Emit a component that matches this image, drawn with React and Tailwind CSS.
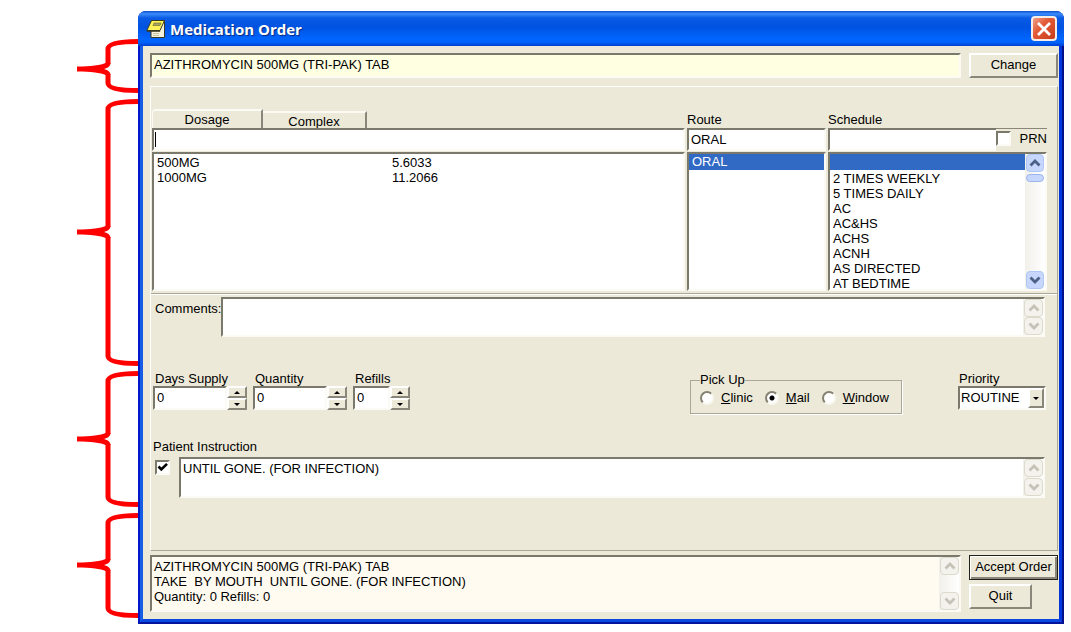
import React, { useState } from "react";

const SUNKEN =
  "border-2 border-t-[#7b786c] border-l-[#7b786c] border-r-[#fbfaf5] border-b-[#fbfaf5]";
const RAISED =
  "border-2 border-t-white border-l-white border-r-[#8a877a] border-b-[#8a877a] bg-[#ece9d8]";

const schedules = [
  "",
  "2 TIMES WEEKLY",
  "5 TIMES DAILY",
  "AC",
  "AC&HS",
  "ACHS",
  "ACNH",
  "AS DIRECTED",
  "AT BEDTIME",
];

const dosages = [
  ["500MG", "5.6033"],
  ["1000MG", "11.2066"],
];

function Brace({ height, tip, className }) {
  const b = height - 3;
  const upper = `M61 3.5 C45 3.5 31 5 31 11 V${tip - 5}`;
  const lower = `M31 ${tip + 5} V${b - 8} C31 ${b - 2} 45 ${b - 0.5} 61 ${b - 0.5}`;
  const point = `M0 ${tip - 2.5} C14 ${tip - 2.5} 24 ${tip - 4} 28.5 ${tip - 6} H33.5 C33.5 ${tip - 3} 31 ${tip - 1} 27 ${tip} C31 ${tip + 1} 33.5 ${tip + 3} 33.5 ${tip + 6} H28.5 C24 ${tip + 4} 14 ${tip + 2.5} 0 ${tip + 2.5} Z`;
  return (
    <svg
      aria-hidden="true"
      width="61"
      height={height}
      viewBox={`0 0 61 ${height}`}
      className={className}
    >
      <path d={upper} fill="none" stroke="#ff0000" strokeWidth="5" />
      <path d={lower} fill="none" stroke="#ff0000" strokeWidth="5" />
      <path d={point} fill="#ff0000" />
    </svg>
  );
}

function Chevron({ up, color }) {
  return (
    <svg width="12" height="8" viewBox="0 0 12 8" aria-hidden="true">
      <path
        d={up ? "M1.5 6.5 L6 2 L10.5 6.5" : "M1.5 1.5 L6 6 L10.5 1.5"}
        fill="none"
        stroke={color}
        strokeWidth="2.8"
      />
    </svg>
  );
}

function Triangle({ up, size }) {
  return (
    <svg width={size} height={size / 2} viewBox="0 0 8 4" aria-hidden="true">
      <path d={up ? "M0 4 L4 0 L8 4 Z" : "M0 0 L4 4 L8 0 Z"} fill="#000" />
    </svg>
  );
}

function ScrollColumn() {
  const button =
    "flex h-[18px] w-[19px] items-center justify-center rounded-sm border border-[#dcdacb] bg-[#f3f2ec]";
  return (
    <div className="flex w-5 shrink-0 flex-col items-end justify-between bg-gradient-to-r from-[#f1f0ea] to-white">
      <button type="button" aria-label="Scroll up" className={button}>
        <Chevron up color="#c5c3b8" />
      </button>
      <button type="button" aria-label="Scroll down" className={button}>
        <Chevron color="#c5c3b8" />
      </button>
    </div>
  );
}

function TitleBar() {
  return (
    <header className="flex h-[35px] items-center bg-[linear-gradient(to_bottom,#0a4fd0_0%,#3c8cf8_8%,#0a5be6_20%,#0052e0_45%,#0066ff_80%,#0061f8_90%,#003fd0_100%)] pr-[7px] pl-2">
      <svg width="20" height="20" viewBox="0 0 20 20" aria-hidden="true">
        <path d="M5 2 H18.5 V18.5 H5 Z" fill="#f4f1dc" stroke="#3a3a20" />
        <path d="M5.5 1.5 H18.5 L14 11.5 H0.8 Z" fill="#fdf25a" stroke="#3a3a20" />
        <path d="M8 4 H15 L14 6.5 H7 Z" fill="#a8a468" stroke="#66622a" strokeWidth="0.6" />
        <path d="M1 12.3 H14.2" fill="none" stroke="#3a3a20" />
        <path d="M7 14.5 H13 M7 16.5 H13" stroke="#c8c4a0" />
      </svg>
      <h1 className="ml-1 flex-1 font-['Open_Sans',sans-serif] text-[15px] font-bold text-white [text-shadow:1px_1px_1px_#0a2a80]">
        Medication Order
      </h1>
      <button
        type="button"
        aria-label="Close"
        className="flex h-[25px] w-[26px] items-center justify-center rounded border-2 border-[#f6ece8] bg-[linear-gradient(135deg,#f0a088_0%,#e25a38_40%,#c83c18_100%)]"
      >
        <svg width="14" height="14" viewBox="0 0 14 14" aria-hidden="true">
          <path d="M1 1 L13 13 M13 1 L1 13" stroke="#fff" strokeWidth="2.8" />
        </svg>
      </button>
    </header>
  );
}

function Spinner({ id, label, inputWidth }) {
  const [value, setValue] = useState(0);
  const step = `flex h-3 w-5 items-center justify-center ${RAISED}`;
  return (
    <div>
      <label htmlFor={id} className="block h-[14px] pl-0.5 leading-[14px] whitespace-nowrap">
        {label}
      </label>
      <div className="flex">
        <input
          id={id}
          value={value}
          onChange={(e) => setValue(e.target.value)}
          className={`h-6 bg-white px-0.5 pb-0.5 outline-none ${inputWidth} ${SUNKEN}`}
        />
        <div className="flex flex-col">
          <button
            type="button"
            aria-label={`Increase ${label}`}
            className={step}
            onClick={() => setValue(Number(value) + 1)}
          >
            <Triangle up size={6} />
          </button>
          <button
            type="button"
            aria-label={`Decrease ${label}`}
            className={step}
            onClick={() => setValue(Math.max(0, Number(value) - 1))}
          >
            <Triangle size={6} />
          </button>
        </div>
      </div>
    </div>
  );
}

function CheckBox({ id, label, defaultChecked }) {
  return (
    <span className="relative flex h-[15px] w-[15px] shrink-0">
      <input
        id={id}
        type="checkbox"
        aria-label={label}
        defaultChecked={defaultChecked}
        className={`peer h-[15px] w-[15px] appearance-none bg-white ${SUNKEN}`}
      />
      <svg
        viewBox="0 0 15 15"
        aria-hidden="true"
        className="pointer-events-none absolute inset-0 hidden peer-checked:block"
      >
        <path d="M3.5 6.5 L6.3 9.5 L12 3.8" fill="none" stroke="#000" strokeWidth="2.6" />
      </svg>
    </span>
  );
}

function PickUpOption({ value, defaultChecked }) {
  return (
    <label className="flex items-center gap-[7px]">
      <input
        type="radio"
        name="pickup"
        value={value}
        defaultChecked={defaultChecked}
        className="h-[14px] w-[14px] appearance-none rounded-full border-2 border-t-[#858274] border-r-[#f8f7f0] border-b-[#f8f7f0] border-l-[#858274] bg-white checked:bg-[radial-gradient(circle,#000_0_2px,#fff_3px)]"
      />
      <span>
        <u>{value[0]}</u>
        {value.slice(1)}
      </span>
    </label>
  );
}

function DosageInput() {
  const [text, setText] = useState("");
  return (
    <div className={`relative mb-px h-[23px] bg-white ${SUNKEN}`}>
      <input
        aria-label="Dosage"
        value={text}
        onChange={(e) => setText(e.target.value)}
        className="block h-full w-full px-0.5 outline-none"
      />
      {text === "" && (
        <span className="pointer-events-none absolute top-0.5 left-px h-[15px] w-px bg-black" />
      )}
    </div>
  );
}

function MedicationSection() {
  const [tab, setTab] = useState("Dosage");
  return (
    <section className="flex items-end gap-0.5 border-b border-[#aca899] pt-[22px] pr-[10px] pb-0.5 pl-px">
      <div className="min-w-0 flex-1">
        <div role="tablist" className="flex h-[19px] items-end">
          <button
            type="button"
            role="tab"
            aria-selected={tab === "Dosage"}
            onClick={() => setTab("Dosage")}
            className="h-[19px] w-[111px] rounded-tl-sm border-t-2 border-r-2 border-l border-t-[#fbfaf5] border-r-[#8a877a] border-l-[#fbfaf5] leading-[17px]"
          >
            Dosage
          </button>
          <button
            type="button"
            role="tab"
            aria-selected={tab === "Complex"}
            onClick={() => setTab("Complex")}
            className="h-[17px] w-[104px] overflow-hidden border-t-2 border-r-2 border-t-[#fbfaf5] border-r-[#8a877a] leading-[18px]"
          >
            Complex
          </button>
        </div>
        <DosageInput />
        <ul
          role="listbox"
          aria-label="Dosage choices"
          className={`h-[139px] bg-white px-[3px] pt-px leading-[15px] ${SUNKEN}`}
        >
          {dosages.map(([dose, price]) => (
            <li key={dose} role="option" aria-selected="false" className="flex">
              <span className="w-[235px]">{dose}</span>
              <span>{price}</span>
            </li>
          ))}
        </ul>
      </div>

      <div className="w-[139px] shrink-0">
        <label htmlFor="route" className="block h-4">
          Route
        </label>
        <input
          id="route"
          defaultValue="ORAL"
          className={`mb-px block h-[23px] w-full bg-white px-0.5 outline-none ${SUNKEN}`}
        />
        <ul
          role="listbox"
          aria-label="Route choices"
          className={`h-[139px] bg-white ${SUNKEN}`}
        >
          <li
            role="option"
            aria-selected="true"
            className="h-4 bg-[#316ac5] px-[3px] leading-4 text-white"
          >
            ORAL
          </li>
        </ul>
      </div>

      <div className="w-[219px] shrink-0">
        <label htmlFor="schedule" className="block h-4">
          Schedule
        </label>
        <div className="mb-px flex h-[23px]">
          <input
            id="schedule"
            className="w-[168px] border-2 border-t-[#7b786c] border-r-0 border-b-[#fbfaf5] border-l-[#7b786c] bg-white px-0.5 outline-none"
          />
          <div className="flex flex-1 items-start justify-between border-t border-[#8a877a] pt-0.5">
            <CheckBox id="prn" label="PRN" />
            <label htmlFor="prn">PRN</label>
          </div>
        </div>
        <div className={`flex h-[139px] bg-white ${SUNKEN}`}>
          <ul role="listbox" aria-label="Schedule choices" className="min-w-0 flex-1 leading-[15px]">
            {schedules.map((name, i) => (
              <li
                key={name || "none"}
                role="option"
                aria-selected={i === 0}
                className={i === 0 ? "mb-px h-4 bg-[#316ac5]" : "h-[15px] pl-[3px]"}
              >
                {name}
              </li>
            ))}
          </ul>
          <div className="flex w-5 flex-col items-center bg-gradient-to-r from-[#f1f0ea] to-white">
            <button
              type="button"
              aria-label="Scroll up"
              className="flex h-[18px] w-[18px] items-center justify-center rounded-sm border border-[#b0c6f4] bg-[#c6d6fc]"
            >
              <Chevron up color="#4d6185" />
            </button>
            <div className="mt-0.5 h-2 w-[18px] rounded-sm border border-[#9db5ee] bg-[#c6d6fc]" />
            <button
              type="button"
              aria-label="Scroll down"
              className="mt-auto flex h-[18px] w-[18px] items-center justify-center rounded-sm border border-[#b0c6f4] bg-[#c6d6fc]"
            >
              <Chevron color="#4d6185" />
            </button>
          </div>
        </div>
      </div>
    </section>
  );
}

function CommentsSection() {
  return (
    <section className="flex border-t border-white pt-0.5 pr-3 pl-1">
      <label htmlFor="comments" className="w-[66px] shrink-0 pt-1">
        Comments:
      </label>
      <div className={`flex h-10 min-w-0 flex-1 bg-white ${SUNKEN}`}>
        <textarea
          id="comments"
          className="min-w-0 flex-1 resize-none overflow-hidden px-0.5 outline-none"
        />
        <ScrollColumn />
      </div>
    </section>
  );
}

function SupplySection() {
  return (
    <section className="mt-[35px] flex items-start pr-[11px] pl-0.5">
      <div className="flex flex-1 gap-1.5">
        <Spinner id="days" label="Days Supply" inputWidth="w-[74px]" />
        <Spinner id="quantity" label="Quantity" inputWidth="w-[74px]" />
        <Spinner id="refills" label="Refills" inputWidth="w-[37px]" />
      </div>
      <fieldset className="mr-14 h-[42px] w-[212px] border border-[#aca899] pl-[9px] shadow-[1px_1px_0_#fff]">
        <legend className="h-4 leading-4">Pick Up</legend>
        <div className="flex h-5 items-center gap-3 whitespace-nowrap">
          <PickUpOption value="Clinic" />
          <PickUpOption value="Mail" defaultChecked />
          <PickUpOption value="Window" />
        </div>
      </fieldset>
      <div className="w-[88px]">
        <label htmlFor="priority" className="block h-[14px] pl-px leading-[14px]">
          Priority
        </label>
        <div className={`relative h-6 bg-white ${SUNKEN}`}>
          <select
            id="priority"
            className="block h-[19px] w-full appearance-none px-px outline-none"
            defaultValue="ROUTINE"
          >
            <option>ROUTINE</option>
          </select>
          <span
            className={`pointer-events-none absolute top-0 right-0 flex h-5 w-4 items-center justify-center ${RAISED}`}
          >
            <Triangle size={6} />
          </span>
        </div>
      </div>
    </section>
  );
}

function InstructionSection() {
  return (
    <section className="mt-[26px] pr-3 pb-[52px] pl-0.5">
      <label htmlFor="instruction" className="block h-[17px] leading-[14px]">
        Patient Instruction
      </label>
      <div className="flex items-start gap-[9px]">
        <div className="pt-[3px] pl-0.5">
          <CheckBox id="use-instruction" label="Use patient instruction" defaultChecked />
        </div>
        <div className={`flex h-[41px] min-w-0 flex-1 bg-white ${SUNKEN}`}>
          <textarea
            id="instruction"
            defaultValue="UNTIL GONE. (FOR INFECTION)"
            className="min-w-0 flex-1 resize-none overflow-hidden px-0.5 pt-0.5 leading-[15px] outline-none"
          />
          <ScrollColumn />
        </div>
      </div>
    </section>
  );
}

export default function App() {
  return (
    <main className="flex items-start bg-white pt-[11px] pr-[7px] pb-[7px] font-['Liberation_Sans',Arial,sans-serif] text-[13px] leading-4 text-black">
      <aside className="flex w-[138px] shrink-0 flex-col items-end pt-[27px]">
        <Brace height={56} tip={31} />
        <Brace height={269} tip={134} className="mt-1" />
        <Brace height={138} tip={69} className="mt-[3px]" />
        <Brace height={107} tip={53} className="mt-1" />
      </aside>

      <div className="min-w-0 flex-1 overflow-hidden rounded-t-lg bg-[#0018c8]">
        <TitleBar />
        <div className="border-r-2 border-b-2 border-l-2 border-r-[#00108c] border-b-[#00149c] border-l-[#0018c8]">
          <div className="border-r-[3px] border-b-[3px] border-l-[3px] border-r-[#0036dc] border-b-[#0a48e0] border-l-[#155ee4] bg-[#ece9d8] pt-[7px] pr-px pb-[7px] pl-[7px]">
            <div className="flex gap-2">
              <input
                aria-label="Medication"
                readOnly
                value="AZITHROMYCIN 500MG (TRI-PAK) TAB"
                className={`h-[25px] min-w-0 flex-1 bg-[#ffffe1] px-0.5 pb-0.5 outline-none ${SUNKEN}`}
              />
              <button type="button" className={`h-[25px] w-[89px] pb-0.5 ${RAISED}`}>
                Change
              </button>
            </div>

            <div className="mt-2 border border-t-white border-r-[#aca899] border-b-[#aca899] border-l-white">
              <MedicationSection />
              <CommentsSection />
              <SupplySection />
              <InstructionSection />
            </div>

            <div className="mt-1 flex items-start gap-2">
              <div className={`flex h-[57px] min-w-0 flex-1 bg-[#fffbf0] ${SUNKEN}`}>
                <textarea
                  aria-label="Order summary"
                  readOnly
                  value={
                    "AZITHROMYCIN 500MG (TRI-PAK) TAB\nTAKE  BY MOUTH  UNTIL GONE. (FOR INFECTION)\nQuantity: 0 Refills: 0"
                  }
                  className="min-w-0 flex-1 resize-none overflow-hidden px-0.5 pt-0.5 leading-[15px] outline-none"
                />
                <ScrollColumn />
              </div>
              <div className="flex w-[89px] flex-col items-start gap-1">
                <button
                  type="button"
                  className="h-[25px] w-full border border-[#22201a] bg-[#ece9d8] pb-0.5 whitespace-nowrap shadow-[inset_1px_1px_0_#fff,inset_-2px_-2px_0_#8a877a]"
                >
                  Accept Order
                </button>
                <button type="button" className={`h-[25px] w-[63px] pb-0.5 ${RAISED}`}>
                  Quit
                </button>
              </div>
            </div>
          </div>
        </div>
      </div>
    </main>
  );
}
